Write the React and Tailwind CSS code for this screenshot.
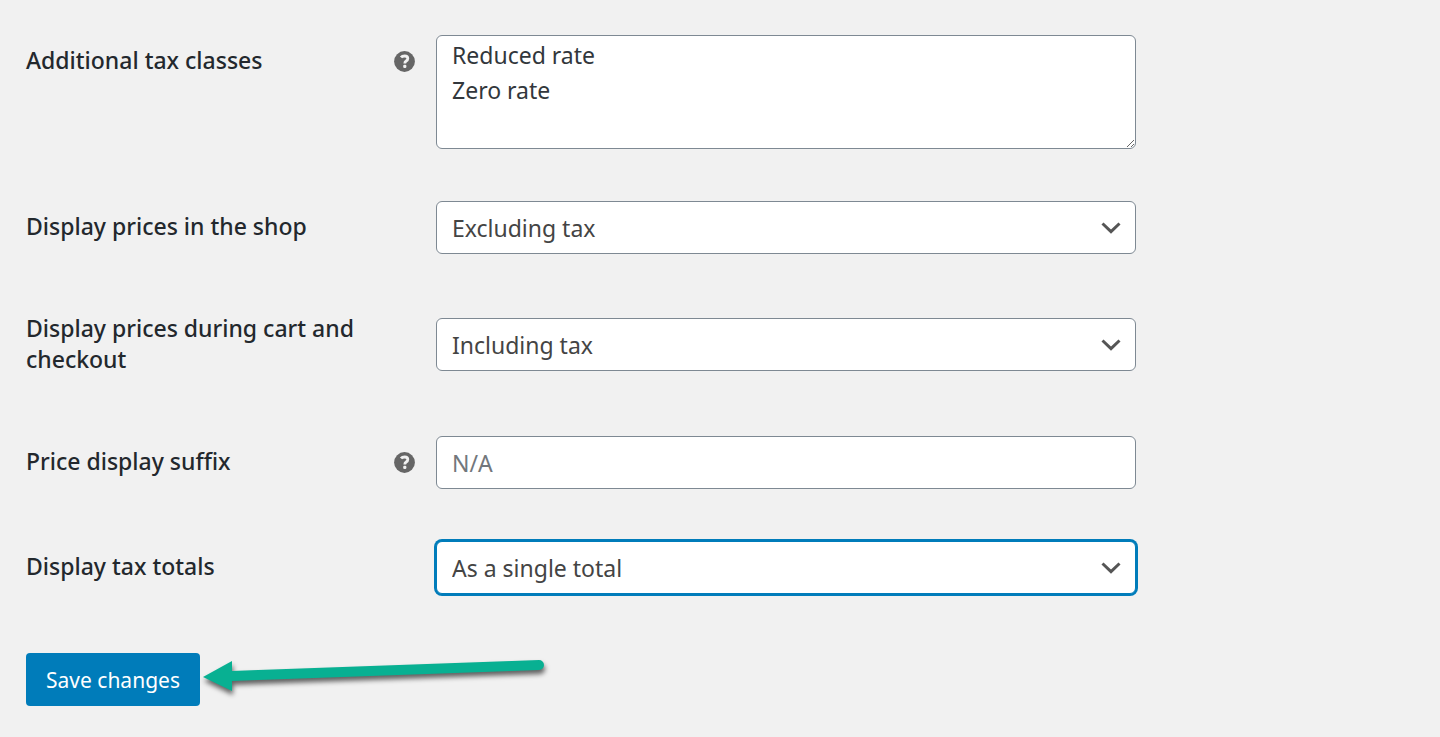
import { useState } from "react";

const fieldClass =
  "block w-full rounded-md border bg-white px-[15px] text-[23px] outline-none focus:border-[#007cba] focus:ring-2 focus:ring-[#007cba]";

function HelpIcon() {
  return (
    <svg viewBox="0 0 21 21" className="size-[21px] shrink-0" role="img" aria-label="Help">
      <circle cx="10.5" cy="10.5" r="10.4" fill="#666" />
      <path
        d="M7 6.4C7.8 5.4 9 5 10.6 5c2 0 3.2 1 3.2 2.6 0 1.1-.6 1.8-1.6 2.4-.9.6-1.4 1-1.4 2.4"
        fill="none"
        stroke="#f1f1f1"
        strokeWidth="2.8"
      />
      <rect x="9.2" y="13.8" width="3.2" height="3.1" rx="1.2" fill="#f1f1f1" />
    </svg>
  );
}

function Row({ id, label, help, top, children }) {
  return (
    <div className={`flex py-[26px] ${top ? "items-start" : "items-center"}`}>
      <div className={`flex w-[410px] shrink-0 items-center justify-between pr-[21px] ${top ? "pt-[10px]" : ""}`}>
        <label htmlFor={id} className="max-w-[350px] pb-[2px] text-[23px] leading-[31px] font-medium text-[#23282d]">
          {label}
        </label>
        {help && <HelpIcon />}
      </div>
      <div className="max-w-[700px] flex-1">{children}</div>
    </div>
  );
}

function Select({ id, options, focused }) {
  const [value, setValue] = useState(options[0]);
  const border = focused ? "border-[#007cba] ring-2 ring-[#007cba]" : "border-[#7e8993]";
  return (
    <div className="relative">
      <select
        id={id}
        value={value}
        onChange={(e) => setValue(e.target.value)}
        className={`${fieldClass} h-[53px] appearance-none pt-[2px] text-[#444] ${border}`}
      >
        {options.map((o) => (
          <option key={o}>{o}</option>
        ))}
      </select>
      <svg
        viewBox="0 0 20 12"
        className="pointer-events-none absolute top-[21px] right-[15px] h-3 w-5"
        fill="none"
        stroke="#555"
        strokeWidth="3"
        aria-hidden="true"
      >
        <path d="M1.5 1.5 10 9.6l8.5-8.1" />
      </svg>
    </div>
  );
}

function Arrow() {
  return (
    <svg viewBox="0 0 350 50" className="h-[50px] w-[350px] overflow-visible" aria-hidden="true">
      <defs>
        <filter id="shadow" x="-5%" y="-30%" width="110%" height="180%" colorInterpolationFilters="sRGB">
          <feDropShadow dx="1" dy="4" stdDeviation="2.5" floodColor="#000" floodOpacity="0.6" />
        </filter>
      </defs>
      <g filter="url(#shadow)" fill="#08b092">
        <path d="M3 24 32 8v10L339 7a5 5 0 0 1 0 10L32 28v10Z" />
      </g>
    </svg>
  );
}

export default function App() {
  return (
    <main className="min-h-screen bg-[#f1f1f1] px-[26px] pt-[9px] font-['Noto_Sans','Open_Sans',sans-serif]">
      <form onSubmit={(e) => e.preventDefault()}>
        <Row id="classes" label="Additional tax classes" help top>
          <textarea
            id="classes"
            defaultValue={"Reduced rate\nZero rate"}
            className={`${fieldClass} h-[114px] resize-y border-[#7e8993] py-[2px] leading-[35px] text-[#32373c]`}
          />
        </Row>
        <Row id="shop" label="Display prices in the shop">
          <Select id="shop" options={["Excluding tax", "Including tax"]} />
        </Row>
        <Row id="cart" label="Display prices during cart and checkout">
          <div className="pt-[12px] pb-[13px]">
            <Select id="cart" options={["Including tax", "Excluding tax"]} />
          </div>
        </Row>
        <Row id="suffix" label="Price display suffix" help>
          <input
            id="suffix"
            type="text"
            placeholder="N/A"
            className={`${fieldClass} h-[53px] border-[#7e8993] placeholder:text-[#72777c]`}
          />
        </Row>
        <Row id="totals" label="Display tax totals">
          <Select id="totals" options={["As a single total", "Itemized"]} focused />
        </Row>
        <div className="flex pt-[33px]">
          <button type="submit" className="h-[53px] w-[174px] rounded bg-[#007cba] pt-[3px] text-[21px] text-white">
            Save changes
          </button>
          <div className="h-[53px]">
            <Arrow />
          </div>
        </div>
      </form>
    </main>
  );
}
